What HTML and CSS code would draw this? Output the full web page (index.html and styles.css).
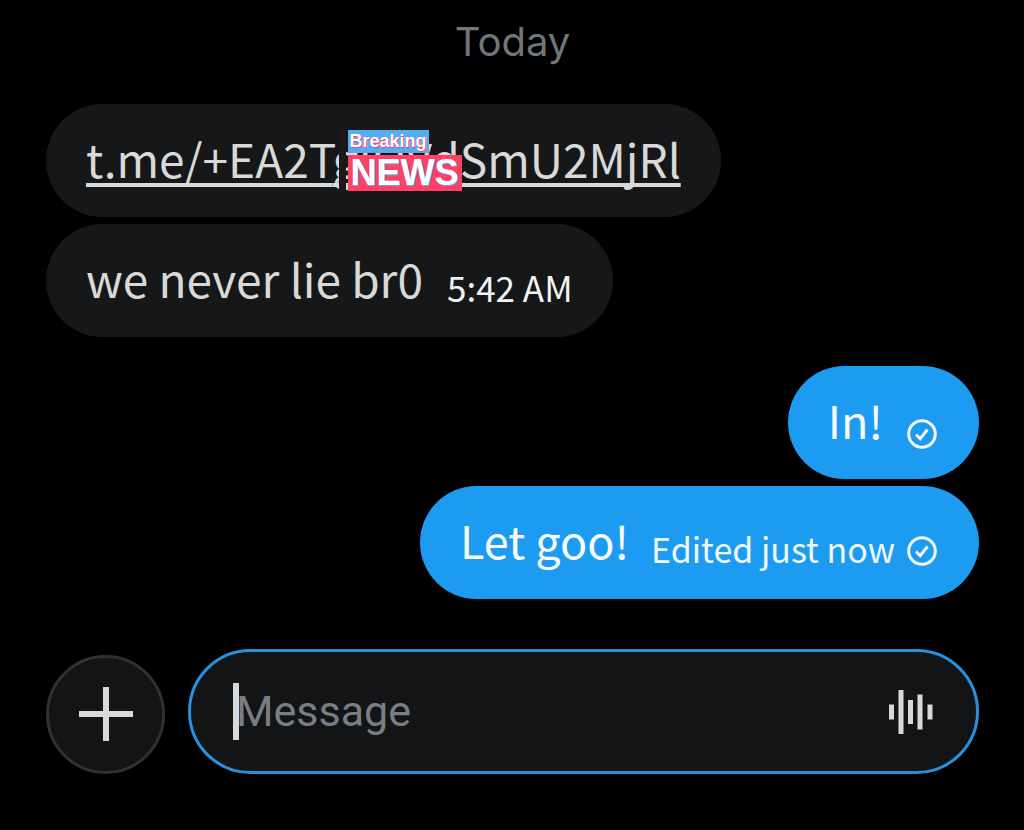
FILE: index.html
```html
<!DOCTYPE html>
<html lang="en">
<head>
<meta charset="utf-8">
<meta name="viewport" content="width=device-width, initial-scale=1">
<title>Messages</title>
<link rel="stylesheet" href="styles.css">
</head>
<body>
<main class="chat">
  <h1 class="day">Today</h1>
  <section class="thread thread-in">
    <div class="bubble">
      <a class="link" href="#">t.me/+EA2T<span class="covered">gIOVd<span class="sticker"><span class="sticker-top">Breaking</span><span class="sticker-bottom">NEWS</span></span></span>SmU2MjRl</a>
    </div>
    <div class="bubble">
      <span class="text">we never lie br0</span>
      <time class="meta">5:42 AM</time>
    </div>
  </section>
  <section class="thread thread-out">
    <div class="bubble">
      <span class="text">In!</span>
      <svg class="check" viewBox="0 0 30 30" role="img" aria-label="Sent"><circle cx="15" cy="15" r="13.3"/><path d="M9 15.500l4.200 4.200 7.300-9.200"/></svg>
    </div>
    <div class="bubble">
      <span class="text">Let goo!</span>
      <span class="meta">Edited just now</span>
      <svg class="check check-near" viewBox="0 0 30 30" role="img" aria-label="Sent"><circle cx="15" cy="15" r="13.3"/><path d="M9 15.500l4.200 4.200 7.300-9.200"/></svg>
    </div>
  </section>
  <form class="composer">
    <button class="add" type="button" aria-label="Add attachment">
      <svg class="plus" viewBox="0 0 54 54"><path d="M27 0v54M0 27h54"/></svg>
    </button>
    <div class="field">
      <span class="caret"></span>
      <input class="input" type="text" placeholder="Message" aria-label="Message">
      <button class="voice" type="button" aria-label="Record voice message">
        <svg class="wave" viewBox="0 0 44 44"><path d="M2.500 14.500v15M12 0v44M21.500 10v24M31 4.500v35M41 14.500v15"/></svg>
      </button>
    </div>
  </form>
</main>
</body>
</html>
```
FILE: styles.css
```css
* {
  box-sizing: border-box;
}

body {
  margin: 0;
  background: #000;
  color: #d9d9d9;
  font-family: "Noto Sans CJK SC", sans-serif;
}

.chat {
  display: flex;
  flex-direction: column;
  padding: 18px 45px 56px 46px;
}

.day {
  margin: 0 0 38px;
  color: #71767b;
  font: 400 40px/48px Inter, sans-serif;
  text-align: center;
}

.thread {
  display: flex;
  flex-direction: column;
  align-items: flex-start;
  gap: 7px;
}

.thread-out {
  align-items: flex-end;
  margin-top: 29px;
}

.bubble {
  display: flex;
  align-items: center;
  height: 113px;
  padding: 0 40px 6px;
  border-radius: 57px;
  background: #151719;
  font-size: 46px;
  line-height: 56px;
  white-space: nowrap;
}

.thread-out .bubble {
  padding-right: 42px;
  background: #1d9bf0;
  color: #f7fbff;
  font-size: 45px;
}

.link {
  color: inherit;
  text-decoration: underline;
  text-decoration-thickness: 4px;
  text-underline-offset: 5px;
  text-decoration-skip-ink: none;
}

.covered {
  position: relative;
}

.sticker {
  position: absolute;
  top: 5px;
  left: 15px;
  display: flex;
  flex-direction: column;
  align-items: flex-start;
  color: #fff;
  font-family: "Liberation Sans", sans-serif;
  font-weight: 700;
}

.sticker::before {
  content: "";
  position: absolute;
  top: -3px;
  left: -9px;
  width: 7px;
  height: 64px;
  background: #1d191b;
}

.sticker-top {
  padding: 0 2px;
  background: #55acee;
  font-size: 18px;
  line-height: 23px;
  text-shadow: 1px 1px #ff3d63;
}

.sticker-bottom {
  margin-top: 2px;
  padding: 0 3px;
  background: #ff4166;
  font-size: 36px;
  line-height: 36px;
  text-shadow: 1px 1px #55acee;
}

.meta {
  margin: 18px 0 0 24px;
  color: #f0f3f5;
  font-size: 35px;
  line-height: 42px;
}

.thread-out .meta {
  margin-left: 22px;
  color: #f0f8ff;
  font-size: 34px;
}

.check {
  width: 30px;
  height: 30px;
  margin: 29px 0 0 24px;
  fill: none;
  stroke: #f0f8ff;
  stroke-width: 3;
}

.check-near {
  margin: 22px 0 0 12px;
}

.composer {
  display: flex;
  align-items: center;
  gap: 23px;
  margin-top: 50px;
}

.add {
  display: grid;
  place-items: center;
  flex: none;
  width: 119px;
  height: 119px;
  margin-top: 5px;
  padding: 0;
  border: 3px solid #2f3133;
  border-radius: 50%;
  background: #121416;
}

.plus {
  width: 54px;
  height: 54px;
  stroke: #d9d9d9;
  stroke-width: 6;
}

.field {
  display: flex;
  align-items: center;
  flex: 1;
  height: 125px;
  padding: 0 43px 0 42px;
  border: 3px solid #2a90dc;
  border-radius: 63px;
  background: #121416;
}

.caret {
  width: 6px;
  height: 57px;
  background: #d9d9d9;
}

.input {
  flex: 1;
  min-width: 0;
  margin-left: -3px;
  padding: 0;
  border: 0;
  outline: 0;
  background: none;
  color: #d9d9d9;
  font: 400 43px/57px Roboto, sans-serif;
}

.input::placeholder {
  color: #787e84;
  opacity: 1;
}

.voice {
  padding: 0;
  border: 0;
  background: none;
}

.wave {
  display: block;
  width: 44px;
  height: 44px;
  stroke: #d9d9d9;
  stroke-width: 5;
}
```
